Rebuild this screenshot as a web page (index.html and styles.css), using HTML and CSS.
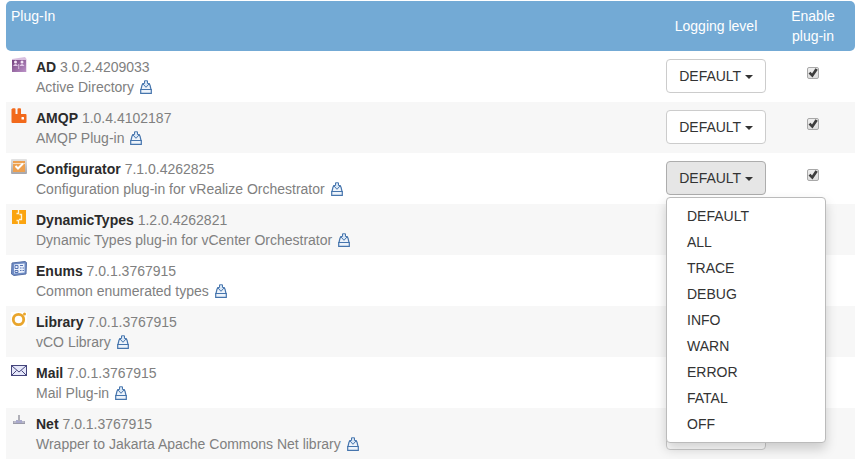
FILE: index.html
```html
<!DOCTYPE html>
<html lang="en">
<head>
    <meta charset="UTF-8">
    <meta name="viewport" content="width=device-width, initial-scale=1.0">
    <title>Plug-Ins</title>
    <link rel="stylesheet" href="styles.css">
</head>
<body>
    <!-- Download icon shared by all rows -->
    <svg class="defs" width="0" height="0" aria-hidden="true">
        <symbol id="download" viewBox="0 0 12 14">
            <path d="M3 4L2 5L1 9.5H11L10 5L9 4" fill="#eef4fb" stroke="#4675ad" stroke-width="1.2"/>
            <path d="M.7 9.5H11.3V13.3H.7Z" fill="#eef4fb" stroke="#4675ad" stroke-width="1.2"/>
            <path d="M4.5 .8H7.5V3.5H9.5L6 7.3L2.5 3.5H4.5Z" fill="#d9e7f6" stroke="#4675ad"/>
        </symbol>
    </svg>

    <table class="plugins">
        <colgroup>
            <col class="icon-width">
            <col>
            <col class="level-width">
            <col class="enable-width">
        </colgroup>
        <thead>
            <tr>
                <th class="plugin-col" colspan="2">Plug-In</th>
                <th>Logging level</th>
                <th class="enable-col">Enable plug-in</th>
            </tr>
        </thead>
        <tbody>
            <tr>
                <td>
                    <svg class="plugin-icon" viewBox="0 0 16 16">
                        <defs><linearGradient id="purple" x2="1" y2="1"><stop stop-color="#74427e"/><stop offset="1" stop-color="#bc92c8"/></linearGradient></defs>
                        <path d="M1 2L14 0L15.5 2V15H1Z" fill="#d9bfdf"/>
                        <path d="M1 3H15V15H1Z" fill="url(#purple)"/>
                        <circle cx="4.5" cy="5" r="1.5" fill="#f4e6f6"/>
                        <circle cx="11" cy="5" r="1.5" fill="#f4e6f6"/>
                        <path d="M2 9Q4.5 5 7 9ZM8.5 9Q11 5 13.5 9Z" fill="#e3cce8"/>
                        <path d="M7.7 7V12" stroke="#eddcf0" stroke-width=".7"/>
                    </svg>
                </td>
                <td class="name-cell">
                    <b>AD</b> 3.0.2.4209033<br>
                    Active Directory <a href="#" class="download" aria-label="Download AD"><svg><use href="#download"/></svg></a>
                </td>
                <td class="level-cell"><div class="dropdown"><button class="btn">DEFAULT <span class="caret"></span></button></div></td>
                <td class="enable-cell"><input type="checkbox" aria-label="Enable AD" checked></td>
            </tr>
            <tr>
                <td>
                    <svg class="plugin-icon" viewBox="0 0 16 16">
                        <path d="M1 1Q1 .3 2 .3H3.5Q4.5 .3 4.5 1V6H6.5V1Q6.5 .3 7.5 .3H9Q10 .3 10 1V6H14.5Q15.5 6 15.5 7V14Q15.5 15 14.5 15H1.5Q.5 15 .5 14V1Z" fill="#f2691b"/>
                        <rect x="10.5" y="9" width="2.5" height="2.5" rx=".5" fill="#fff"/>
                    </svg>
                </td>
                <td class="name-cell">
                    <b>AMQP</b> 1.0.4.4102187<br>
                    AMQP Plug-in <a href="#" class="download" aria-label="Download AMQP"><svg><use href="#download"/></svg></a>
                </td>
                <td class="level-cell"><div class="dropdown"><button class="btn">DEFAULT <span class="caret"></span></button></div></td>
                <td class="enable-cell"><input type="checkbox" aria-label="Enable AMQP" checked></td>
            </tr>
            <tr>
                <td>
                    <svg class="plugin-icon" viewBox="0 0 16 16">
                        <defs><linearGradient id="grey" x2="0" y2="1"><stop stop-color="#e4e4e4"/><stop offset="1" stop-color="#a5a5aa"/></linearGradient></defs>
                        <rect width="16" height="15" rx="1" fill="url(#grey)"/>
                        <rect x="2" y="2" width="12" height="11" fill="#eda050"/>
                        <path d="M2 4.5H14" stroke="#fadcb8"/>
                        <path d="M4.5 7L7 9.5L12 4.5" fill="none" stroke="#fff" stroke-width="2"/>
                    </svg>
                </td>
                <td class="name-cell">
                    <b>Configurator</b> 7.1.0.4262825<br>
                    Configuration plug-in for vRealize Orchestrator <a href="#" class="download" aria-label="Download Configurator"><svg><use href="#download"/></svg></a>
                </td>
                <td class="level-cell">
                    <div class="dropdown open">
                        <button class="btn" aria-expanded="true">DEFAULT <span class="caret"></span></button>
                        <ul class="menu">
                            <li><button>DEFAULT</button></li>
                            <li><button>ALL</button></li>
                            <li><button>TRACE</button></li>
                            <li><button>DEBUG</button></li>
                            <li><button>INFO</button></li>
                            <li><button>WARN</button></li>
                            <li><button>ERROR</button></li>
                            <li><button>FATAL</button></li>
                            <li><button>OFF</button></li>
                        </ul>
                    </div>
                </td>
                <td class="enable-cell"><input type="checkbox" aria-label="Enable Configurator" checked></td>
            </tr>
            <tr>
                <td>
                    <svg class="plugin-icon" viewBox="0 0 16 16">
                        <rect x="1" width="14" height="14" fill="#fba40f"/>
                        <path d="M7.5 0V3.5H5.5M5.5 10.5H7.5V14M8.5 4.5H10.5V9.5H8" fill="none" stroke="#fff4d8" stroke-width="1.3"/>
                    </svg>
                </td>
                <td class="name-cell">
                    <b>DynamicTypes</b> 1.2.0.4262821<br>
                    Dynamic Types plug-in for vCenter Orchestrator <a href="#" class="download" aria-label="Download DynamicTypes"><svg><use href="#download"/></svg></a>
                </td>
                <td class="level-cell"><div class="dropdown"><button class="btn">DEFAULT <span class="caret"></span></button></div></td>
                <td class="enable-cell"><input type="checkbox" aria-label="Enable DynamicTypes" checked></td>
            </tr>
            <tr>
                <td>
                    <svg class="plugin-icon" viewBox="0 0 16 16">
                        <path d="M1 2L14 .5L15.5 1.5L15 13L3 14.5L.5 13Z" fill="#6f8dc6" stroke="#5770a6"/>
                        <path d="M3 3.5L13.5 2.5V11.5L3 12.5Z" fill="#e9f0fc"/>
                        <path d="M4 4.5H7V7.5H4ZM4 9.5H7V11.5H4ZM9 4.5H12M9 7H10.5M11.5 7H13M9 9.5H10.5M11.5 9.5H13" fill="none" stroke="#5875b2"/>
                    </svg>
                </td>
                <td class="name-cell">
                    <b>Enums</b> 7.0.1.3767915<br>
                    Common enumerated types <a href="#" class="download" aria-label="Download Enums"><svg><use href="#download"/></svg></a>
                </td>
                <td class="level-cell"><div class="dropdown"><button class="btn">DEFAULT <span class="caret"></span></button></div></td>
                <td class="enable-cell"><input type="checkbox" aria-label="Enable Enums" checked></td>
            </tr>
            <tr>
                <td>
                    <svg class="plugin-icon" viewBox="0 0 16 16">
                        <rect width="16" height="15" fill="#fff"/>
                        <circle cx="7.5" cy="7.5" r="5.2" fill="none" stroke="#e9a52c" stroke-width="2.8"/>
                        <circle cx="13.5" cy="2" r="1.5" fill="#e9a52c"/>
                    </svg>
                </td>
                <td class="name-cell">
                    <b>Library</b> 7.0.1.3767915<br>
                    vCO Library <a href="#" class="download" aria-label="Download Library"><svg><use href="#download"/></svg></a>
                </td>
                <td class="level-cell"><div class="dropdown"><button class="btn">DEFAULT <span class="caret"></span></button></div></td>
                <td class="enable-cell"><input type="checkbox" aria-label="Enable Library" checked></td>
            </tr>
            <tr>
                <td>
                    <svg class="plugin-icon" viewBox="0 0 16 16">
                        <rect x=".5" y="2.5" width="15" height="10" fill="#e6e8fa" stroke="#45457c"/>
                        <path d="M1 3L8 9L15 3M1 12L5.5 7.5M15 12L10.5 7.5" fill="none" stroke="#45457c"/>
                    </svg>
                </td>
                <td class="name-cell">
                    <b>Mail</b> 7.0.1.3767915<br>
                    Mail Plug-in <a href="#" class="download" aria-label="Download Mail"><svg><use href="#download"/></svg></a>
                </td>
                <td class="level-cell"><div class="dropdown"><button class="btn">DEFAULT <span class="caret"></span></button></div></td>
                <td class="enable-cell"><input type="checkbox" aria-label="Enable Mail" checked></td>
            </tr>
            <tr>
                <td>
                    <svg class="plugin-icon" viewBox="0 0 16 16">
                        <path d="M2 8.5H14" stroke="#9a9aa8" stroke-width="3"/>
                        <path d="M2.5 8H13.5" stroke="#d8d8e8"/>
                        <rect x="5" y="6" width="6" height="3" fill="#a9a9cc"/>
                        <path d="M8 1V7" stroke="#b0b0b8" stroke-width="2"/>
                    </svg>
                </td>
                <td class="name-cell">
                    <b>Net</b> 7.0.1.3767915<br>
                    Wrapper to Jakarta Apache Commons Net library <a href="#" class="download" aria-label="Download Net"><svg><use href="#download"/></svg></a>
                </td>
                <td class="level-cell"><div class="dropdown"><button class="btn">DEFAULT <span class="caret"></span></button></div></td>
                <td class="enable-cell"><input type="checkbox" aria-label="Enable Net" checked></td>
            </tr>
        </tbody>
    </table>
</body>
</html>
```
FILE: styles.css
```css
body {
    margin: 1px 4px 0 6px;
    font-family: "Liberation Sans", Arial, sans-serif;
    font-size: 14px;
    line-height: 20px;
    color: #808080;
    background-color: #fff;
}
.defs {
    position: absolute;
}
.plugins {
    width: 100%;
    border-spacing: 0;
    table-layout: fixed;
}
.icon-width {
    width: 30px;
}
.level-width {
    width: 110px;
}
.enable-width {
    width: 84px;
}
th, td {
    padding: 5px;
}
th {
    background-color: #73aad5;
    color: #fff;
    font-weight: normal;
}
th:first-child {
    border-radius: 5px 0 0 5px;
}
th:last-child {
    border-radius: 0 5px 5px 0;
}
.plugin-col {
    text-align: left;
    vertical-align: top;
}
.enable-col {
    padding: 5px 15px;
}
td {
    border-top: 1px solid #fff;
    vertical-align: top;
}
tbody tr:nth-child(even) td {
    background-color: #f7f7f7;
    border-top-color: #f7f7f7;
}
b {
    color: #2b2b2b;
}
.name-cell {
    padding-left: 0;
}
.plugin-icon {
    display: block;
    width: 16px;
    height: 16px;
}
.download svg {
    width: 12px;
    height: 14px;
    margin-left: 2px;
    vertical-align: -2px;
}
.level-cell {
    padding-top: 7px;
}
.dropdown {
    position: relative;
}
.btn {
    display: block;
    width: 100%;
    height: 34px;
    padding: 0;
    font: inherit;
    color: #333;
    background-color: #fff;
    border: 1px solid #ccc;
    border-radius: 4px;
    cursor: pointer;
}
.btn:hover,
.open .btn {
    background-color: #e6e6e6;
    border-color: #adadad;
}
.caret {
    display: inline-block;
    border-top: 4px solid #333;
    border-left: 4px solid transparent;
    border-right: 4px solid transparent;
    vertical-align: middle;
}
/* Opens over the rows below */
.menu {
    position: absolute;
    top: 100%;
    left: 0;
    z-index: 10;
    width: 160px;
    box-sizing: border-box;
    margin: 2px 0 0;
    padding: 5px 0;
    list-style: none;
    background-color: #fff;
    border: 1px solid #bbb;
    border-radius: 4px;
    box-shadow: 0 6px 12px rgba(0,0,0,0.18);
}
.menu button {
    display: block;
    width: 100%;
    padding: 3px 20px;
    font: inherit;
    color: #333;
    text-align: left;
    background: none;
    border: none;
    cursor: pointer;
}
.menu button:hover {
    background-color: #f5f5f5;
}
.enable-cell input {
    appearance: none;
    display: block;
    width: 12px;
    height: 12px;
    box-sizing: border-box;
    margin: 10px auto 0;
    border: 1px solid #a8a8a8;
    border-radius: 2px;
    background: linear-gradient(#eee, #ddd);
}
.enable-cell input:checked::before {
    content: "";
    display: block;
    height: 10px;
    background-color: #3c3c3c;
    clip-path: polygon(5% 55%, 25% 38%, 40% 55%, 75% 2%, 98% 18%, 45% 95%);
}
```
